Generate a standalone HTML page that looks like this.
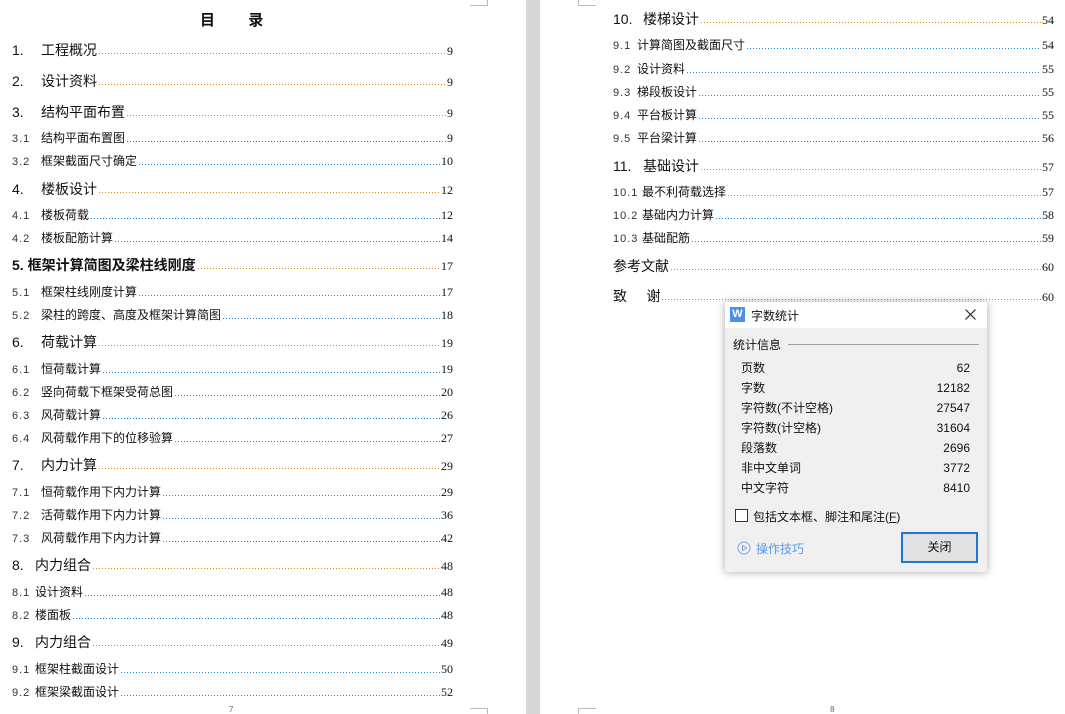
<!DOCTYPE html>
<html><head><meta charset="utf-8"><style>
*{margin:0;padding:0;box-sizing:border-box}
body{width:1065px;height:714px;position:relative;background:#fff;overflow:hidden;font-family:"Liberation Sans","Noto Sans CJK SC",sans-serif;color:#111}
.gap{position:absolute;left:526px;top:0;width:14px;height:714px;background:#d6d7d9}
.r{position:absolute;height:20px;display:flex;align-items:baseline;white-space:nowrap;line-height:20px}
.L{left:12px;width:441px}.R{left:613px;width:441px}
.n1{font-size:14px;width:29px}.t1{font-size:14px}
.n2{font-size:11px;width:29px;color:#333;letter-spacing:1px}.t2{font-size:12px}
.d{flex:1;align-self:flex-start;height:1px;margin:13px 1px 0 2px;background:repeating-linear-gradient(to right,#e08a10 0 1px,transparent 1px 3px)}
.b .d{background:repeating-linear-gradient(to right,#1a8ae8 0 1px,transparent 1px 3px)}
.p{font-family:"Liberation Serif",serif;font-size:12px}
.mk{position:absolute;border-color:#bbb;border-style:solid;width:18px;height:6px}
.dlg{position:absolute;left:725px;top:302px;width:262px;height:270px;background:#f0f0f0;box-shadow:0 0 8px rgba(0,0,0,.35);font-size:12px}
</style></head><body>
<div class="gap"></div>
<div class="mk" style="left:470px;top:0;border-width:0 1px 1px 0"></div>
<div class="mk" style="left:578px;top:0;border-width:0 0 1px 1px"></div>
<div class="mk" style="left:470px;top:708px;border-width:1px 1px 0 0"></div>
<div class="mk" style="left:578px;top:708px;border-width:1px 0 0 1px"></div>
<div style="position:absolute;left:200px;top:9px;font-size:15px;font-weight:bold">目&nbsp;&nbsp;&nbsp;&nbsp;&nbsp;&nbsp;&nbsp;&nbsp;录</div>
<div style="position:absolute;left:229px;top:705px;font-size:8px;color:#666">7</div>
<div style="position:absolute;left:830px;top:705px;font-size:8px;color:#666">8</div>

<div class="r L" style="top:40px"><span class="n1">1.</span><span class="t1">工程概况</span><span class="d"></span><span class="p">9</span></div>
<div class="r L" style="top:71px"><span class="n1">2.</span><span class="t1">设计资料</span><span class="d"></span><span class="p">9</span></div>
<div class="r L" style="top:102px"><span class="n1">3.</span><span class="t1">结构平面布置</span><span class="d"></span><span class="p">9</span></div>
<div class="r L b" style="top:128px"><span class="n2">3.1</span><span class="t2">结构平面布置图</span><span class="d"></span><span class="p">9</span></div>
<div class="r L b" style="top:151px"><span class="n2">3.2</span><span class="t2">框架截面尺寸确定</span><span class="d"></span><span class="p">10</span></div>
<div class="r L" style="top:179px"><span class="n1">4.</span><span class="t1">楼板设计</span><span class="d"></span><span class="p">12</span></div>
<div class="r L b" style="top:205px"><span class="n2">4.1</span><span class="t2">楼板荷载</span><span class="d"></span><span class="p">12</span></div>
<div class="r L b" style="top:228px"><span class="n2">4.2</span><span class="t2">楼板配筋计算</span><span class="d"></span><span class="p">14</span></div>
<div class="r L" style="top:255px"><span class="t1" style="font-weight:bold">5. 框架计算简图及梁柱线刚度</span><span class="d"></span><span class="p">17</span></div>
<div class="r L b" style="top:282px"><span class="n2">5.1</span><span class="t2">框架柱线刚度计算</span><span class="d"></span><span class="p">17</span></div>
<div class="r L b" style="top:305px"><span class="n2">5.2</span><span class="t2">梁柱的跨度、高度及框架计算简图</span><span class="d"></span><span class="p">18</span></div>
<div class="r L" style="top:332px"><span class="n1">6.</span><span class="t1">荷载计算</span><span class="d"></span><span class="p">19</span></div>
<div class="r L b" style="top:359px"><span class="n2">6.1</span><span class="t2">恒荷载计算</span><span class="d"></span><span class="p">19</span></div>
<div class="r L b" style="top:382px"><span class="n2">6.2</span><span class="t2">竖向荷载下框架受荷总图</span><span class="d"></span><span class="p">20</span></div>
<div class="r L b" style="top:405px"><span class="n2">6.3</span><span class="t2">风荷载计算</span><span class="d"></span><span class="p">26</span></div>
<div class="r L b" style="top:428px"><span class="n2">6.4</span><span class="t2">风荷载作用下的位移验算</span><span class="d"></span><span class="p">27</span></div>
<div class="r L" style="top:455px"><span class="n1">7.</span><span class="t1">内力计算</span><span class="d"></span><span class="p">29</span></div>
<div class="r L b" style="top:482px"><span class="n2">7.1</span><span class="t2">恒荷载作用下内力计算</span><span class="d"></span><span class="p">29</span></div>
<div class="r L b" style="top:505px"><span class="n2">7.2</span><span class="t2">活荷载作用下内力计算</span><span class="d"></span><span class="p">36</span></div>
<div class="r L b" style="top:528px"><span class="n2">7.3</span><span class="t2">风荷载作用下内力计算</span><span class="d"></span><span class="p">42</span></div>
<div class="r L" style="top:555px"><span class="n1" style="width:23px">8.</span><span class="t1">内力组合</span><span class="d"></span><span class="p">48</span></div>
<div class="r L b" style="top:582px"><span class="n2" style="width:23px">8.1</span><span class="t2">设计资料</span><span class="d"></span><span class="p">48</span></div>
<div class="r L b" style="top:605px"><span class="n2" style="width:23px">8.2</span><span class="t2">楼面板</span><span class="d"></span><span class="p">48</span></div>
<div class="r L" style="top:632px"><span class="n1" style="width:23px">9.</span><span class="t1">内力组合</span><span class="d"></span><span class="p">49</span></div>
<div class="r L b" style="top:659px"><span class="n2" style="width:23px">9.1</span><span class="t2">框架柱截面设计</span><span class="d"></span><span class="p">50</span></div>
<div class="r L b" style="top:682px"><span class="n2" style="width:23px">9.2</span><span class="t2">框架梁截面设计</span><span class="d"></span><span class="p">52</span></div>

<div class="r R" style="top:9px"><span class="n1" style="width:30px">10.</span><span class="t1">楼梯设计</span><span class="d"></span><span class="p">54</span></div>
<div class="r R b" style="top:35px"><span class="n2" style="width:24px">9.1</span><span class="t2">计算简图及截面尺寸</span><span class="d"></span><span class="p">54</span></div>
<div class="r R b" style="top:59px"><span class="n2" style="width:24px">9.2</span><span class="t2">设计资料</span><span class="d"></span><span class="p">55</span></div>
<div class="r R b" style="top:82px"><span class="n2" style="width:24px">9.3</span><span class="t2">梯段板设计</span><span class="d"></span><span class="p">55</span></div>
<div class="r R b" style="top:105px"><span class="n2" style="width:24px">9.4</span><span class="t2">平台板计算</span><span class="d"></span><span class="p">55</span></div>
<div class="r R b" style="top:128px"><span class="n2" style="width:24px">9.5</span><span class="t2">平台梁计算</span><span class="d"></span><span class="p">56</span></div>
<div class="r R" style="top:156px"><span class="n1" style="width:30px">11.</span><span class="t1">基础设计</span><span class="d"></span><span class="p">57</span></div>
<div class="r R" style="top:182px"><span class="n2" style="width:29px">10.1</span><span class="t2">最不利荷载选择</span><span class="d"></span><span class="p">57</span></div>
<div class="r R b" style="top:205px"><span class="n2" style="width:29px">10.2</span><span class="t2">基础内力计算</span><span class="d"></span><span class="p">58</span></div>
<div class="r R b" style="top:228px"><span class="n2" style="width:29px">10.3</span><span class="t2">基础配筋</span><span class="d"></span><span class="p">59</span></div>
<div class="r R" style="top:256px"><span class="t1">参考文献</span><span class="d"></span><span class="p">60</span></div>
<div class="r R" style="top:286px"><span class="t1">致&nbsp;&nbsp;&nbsp;&nbsp;&nbsp;谢</span><span class="d"></span><span class="p">60</span></div>

<div class="dlg">
 <div style="height:26px;background:#fff;position:relative">
  <div style="position:absolute;left:5px;top:5px;width:15px;height:15px;background:#4a8fe8;color:#fff;font-size:11px;line-height:15px;text-align:center;font-weight:bold">W</div>
  <div style="position:absolute;left:26px;top:5px;font-size:12px">字数统计</div>
  <svg style="position:absolute;left:240px;top:7px" width="11" height="11" viewBox="0 0 11 11"><path d="M0.5 0.5L10.5 10.5M10.5 0.5L0.5 10.5" stroke="#222" stroke-width="1.2"/></svg>
 </div>
 <div style="position:absolute;left:8px;top:34px">统计信息</div>
 <div style="position:absolute;left:63px;right:8px;top:42px;height:1px;background:#a0a0a0"></div>
 <div style="position:absolute;left:16px;top:56px;line-height:20px">页数<br>字数<br>字符数(不计空格)<br>字符数(计空格)<br>段落数<br>非中文单词<br>中文字符</div>
 <div style="position:absolute;right:17px;top:56px;line-height:20px;text-align:right">62<br>12182<br>27547<br>31604<br>2696<br>3772<br>8410</div>
 <div style="position:absolute;left:10px;top:207px;width:13px;height:13px;border:1px solid #333;background:#fff"></div>
 <div style="position:absolute;left:28px;top:206px">包括文本框、脚注和尾注(<u>F</u>)</div>
 <svg style="position:absolute;left:12px;top:239px" width="14" height="14" viewBox="0 0 14 14"><circle cx="7" cy="7" r="6" fill="none" stroke="#7aa8e0"/><path d="M5.5 4.5L9.5 7L5.5 9.5Z" fill="none" stroke="#7aa8e0"/></svg>
 <div style="position:absolute;left:31px;top:238px;color:#5b9be0">操作技巧</div>
 <div style="position:absolute;left:176px;top:230px;width:77px;height:31px;border:2px solid #1a78d0;background:#e1e1e1;text-align:center;line-height:27px">关闭</div>
</div>
</body></html>
